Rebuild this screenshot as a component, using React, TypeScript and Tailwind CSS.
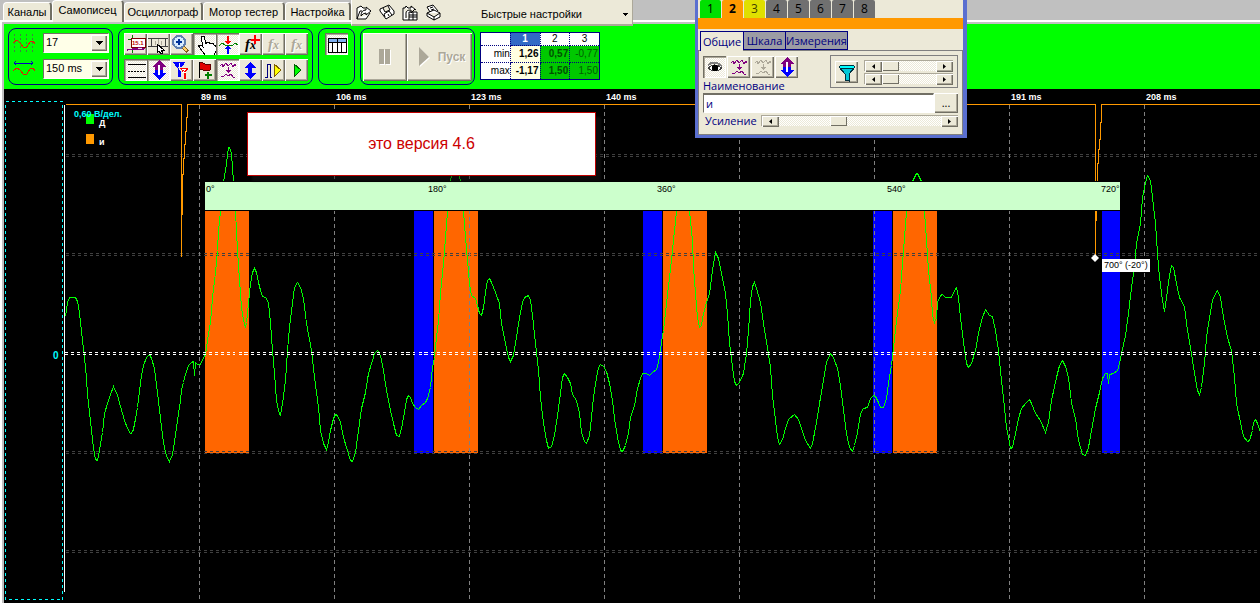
import { useState } from "react";
import clsx from "clsx";

const RAISED = "bg-[#ece9d8] shadow-[inset_1px_1px_0_#fff,inset_-1px_-1px_0_#716f64,inset_-2px_-2px_0_#aca899]";
const PRESSED = "bg-[repeating-conic-gradient(#ffffff_0_25%,#ece9d8_0_50%)] bg-[length:2px_2px] shadow-[inset_1px_1px_0_#716f64,inset_2px_2px_0_#aca899,inset_-1px_-1px_0_#fff]";
const DITHER = "bg-[repeating-conic-gradient(#ffffff_0_25%,#ece9d8_0_50%)] bg-[length:2px_2px]";

const tabs = [
    { name: "Каналы", size: "w-[49px]" },
    { name: "Самописец", size: "w-[72px]" },
    { name: "Осциллограф", size: "w-[79px]" },
    { name: "Мотор тестер", size: "w-[82px]" },
    { name: "Настройка", size: "w-[66px]" },
];

const times = [
    { x: 199, label: "89 ms" },
    { x: 334, label: "106 ms" },
    { x: 469, label: "123 ms" },
    { x: 604, label: "140 ms" },
    { x: 739, label: "" },
    { x: 874, label: "" },
    { x: 1009, label: "191 ms" },
    { x: 1144, label: "208 ms" },
];

const levels = [154, 156, 253, 255, 451, 453, 550, 552];

const phases = [
    { x: 205, label: "0°" },
    { x: 427, label: "180°" },
    { x: 656, label: "360°" },
    { x: 886, label: "540°" },
    { x: 1100, label: "720°" },
];

const signal =
    "65,316 66,309 67,302 69,297 75,297 77,301 79,312 80,322 82,340 84,357 86,378 87,394 89,412 91,430 93,448 95,459 97,460 98,455 100,444 102,432 104,413 107,403 110,394 113,386 117,395 120,406 124,420 127,428 130,433 132,432 134,424 137,407 139,391 141,375 143,365 146,357 149,354 151,358 154,368 157,392 160,418 163,442 166,456 169,461 172,454 174,441 177,420 180,400 181,389 183,382 185,374 188,365 191,362 193,361 194,375 195,362 197,364 200,364 202,359 204,356 " +
    "205,354 207,340 210,322 212,297 215,272 217,250 218,230 220,211 223,181 225,170 227,155 228,147 229,147 231,153 232,168 233,181 235,211 237,250 239,280 241,307 243,320 245,327 246,322 248,303 250,283 252,272 254,268 256,272 258,282 260,290 262,296 265,297 268,302 270,323 272,350 274,373 276,400 279,414 280,415 282,403 285,380 287,350 289,327 292,303 294,287 297,282 300,287 303,298 306,323 311,350 314,377 318,407 320,430 323,443 326,449 328,442 330,430 333,418 335,414 337,415 340,422 343,437 347,450 350,460 352,461 355,452 358,430 361,408 365,392 368,373 372,360 374,353 377,350 380,355 383,370 386,390 390,410 393,423 396,435 399,436 401,428 404,412 406,399 408,395 410,397 412,403 415,407 418,409 421,405 425,402 427,398 430,387 432,367 " +
    "434,357 436,337 438,320 440,293 443,263 445,237 447,211 450,181 455,150 460,181 463,211 465,237 467,260 469,283 471,295 475,298 477,305 479,313 481,315 483,307 485,292 487,280 489,278 491,282 495,292 499,303 501,323 505,343 508,357 510,361 513,355 516,337 519,317 522,302 524,297 528,295 530,300 532,315 535,343 538,370 540,397 543,423 546,440 548,448 551,446 554,435 557,415 560,393 562,377 564,373 567,377 570,383 572,394 576,400 579,413 581,432 584,441 586,443 589,435 591,417 593,397 596,377 598,367 600,364 603,366 606,371 609,383 612,400 614,418 617,437 620,450 622,451 625,445 628,432 630,417 634,405 637,388 640,378 642,373 646,373 649,375 652,372 656,369 658,362 661,342 " +
    "663,330 666,303 669,277 672,250 674,230 676,211 682,186 689,211 692,240 693,267 695,293 697,317 699,327 701,325 703,313 706,302 709,293 712,270 714,257 715,252 718,258 721,273 725,293 727,313 729,343 730,350 732,367 734,381 736,385 739,382 743,373 746,353 748,330 750,300 752,286 754,282 756,288 760,302 763,323 767,347 770,367 772,395 775,420 777,437 779,444 782,439 785,428 788,419 794,414 798,419 801,428 805,440 810,448 812,443 816,422 819,403 823,380 826,362 830,353 833,357 837,368 840,385 843,410 846,433 849,447 852,451 854,445 857,432 860,413 863,408 867,407 870,398 873,395 875,396 878,402 880,407 883,407 886,398 888,383 891,365 " +
    "893,347 896,320 900,290 902,263 904,237 906,211 912,181 916,173 917,173 921,181 924,211 926,240 928,270 931,297 932,315 934,322 936,317 937,302 940,295 942,294 945,297 951,297 954,290 956,287 958,297 960,317 963,342 966,363 968,367 971,363 975,350 978,333 981,320 985,309 989,315 992,316 995,330 998,350 1001,380 1004,407 1006,427 1009,442 1010,448 1012,447 1015,433 1018,418 1021,408 1026,402 1029,399 1031,403 1035,413 1040,420 1045,432 1048,422 1051,400 1056,377 1059,365 1062,360 1065,366 1068,377 1071,402 1075,418 1078,440 1082,454 1085,455 1088,447 1091,430 1095,408 1099,392 1102,378 1105,373 1107,373 1108,383 1109,374 1113,373 1117,370 1119,363 " +
    "1121,353 1125,335 1128,313 1131,287 1134,267 1136,243 1140,223 1142,197 1145,182 1147,175 1150,180 1152,197 1155,223 1157,253 1159,277 1162,300 1164,311 1166,297 1169,275 1171,265 1173,267 1176,283 1179,297 1184,306 1187,330 1191,353 1194,373 1197,390 1199,394 1201,387 1204,363 1206,337 1209,317 1212,300 1215,293 1217,290 1220,297 1223,317 1227,337 1231,350 1234,377 1236,403 1240,422 1243,436 1247,441 1249,440 1252,430 1253,422 1255,419 1257,423 1260,432";

const ignition =
    "65,104 181,104 181,256 181,214 182,214 182,174 183,174 183,158 184,158 184,144 185,144 185,131 186,131 186,117 187,117 187,104 1095,104 1095,254 1095,220 1096,220 1096,182 1097,182 1097,163 1098,163 1098,149 1099,149 1099,139 1100,139 1100,122 1101,122 1101,104 2400,104";

// waves with an arrow between, used in both toolbars
function Waves({ color }: { color: string }) {
    return (
        <path
            d="M4 7l2 -2l1 3l3 -4l2 3l3 -3l2 4l2 -3l1 2M5 17l2 1l3 -3l2 2l3 -2l2 3h2M12 8v4M10 11h5M11 12h3M12 13h1"
            fill="none"
            stroke={color}
        />
    );
}

function UpDown({ top, bottom }: { top: string; bottom: string }) {
    return (
        <>
            <path d="M12 1l7 7h-3v3h-8v-3h-3z" fill={top} />
            <path d="M12 21l7 -7h-3v-3h-8v3h-3z" fill={bottom} />
            <path d="M12 6v10" stroke="#ffffff" strokeWidth="2" />
        </>
    );
}

function Fx({ color, shadow }: { color: string; shadow?: boolean }) {
    return (
        <g className="font-['Liberation_Serif'] text-[15px] font-bold italic">
            {shadow && <text x="7" y="17" fill="#ffffff">f<tspan fontSize="12">x</tspan></text>}
            <text x="6" y="16" fill={color}>f<tspan fontSize="12">x</tspan></text>
        </g>
    );
}

const tools = [
    {
        name: "Значения",
        icon: (
            <>
                <path d="M8 2v18M4 6h4" stroke="#008000" />
                <rect x="7" y="5" width="14" height="9" fill="#fff" stroke="#800000" />
                <text x="8" y="12" fill="#c00000" className="font-['Liberation_Sans'] text-[6px] font-bold">15.1</text>
                <path d="M3 18l2 -2l2 1l2 -2h5l2 -1l2 1h3M3 16h17" fill="none" stroke="#800080" />
            </>
        ),
    },
    {
        name: "Линейка",
        icon: (
            <>
                <path d="M1 5h20M1 13h20M4 5v8M18 5v8" stroke="#404040" />
                <path d="M8 8v4M11 6v6M14 8v4" stroke="#aca899" />
                <path d="M10 11v9l2 -2l2 3l2 -1l-2 -3h3z" fill="#fff" stroke="#000" />
            </>
        ),
    },
    {
        name: "Масштаб",
        icon: (
            <>
                <path d="M12 13l6 6" stroke="#806020" strokeWidth="4" />
                <path d="M12 13l5 5" stroke="#ffcc66" strokeWidth="2" />
                <circle cx="9" cy="9" r="6" fill="#d8ecff" stroke="#6080b0" strokeWidth="2" />
                <path d="M9 6v6M6 9h6" stroke="#003399" strokeWidth="2" />
            </>
        ),
    },
    {
        name: "Рука",
        pressed: true,
        icon: (
            <path
                d="M10 14l-2 -10l1 -1h2l2 8l1 -2h2l1 2l1 -1h2l1 2h1l1 2v4l-2 4h-9l-5 -7l-2 -3h3z"
                fill="#fff"
                stroke="#000"
            />
        ),
    },
    {
        name: "Синхронизация",
        pressed: true,
        icon: (
            <>
                <path d="M3 13l3 -3l3 2h4l3 1l3 -3l3 2" fill="none" stroke="#008000" />
                <path d="M11 3h2v5h2l-3 4l-3 -4h2z" fill="#ff0000" />
                <path d="M11 21h2v-5h2l-3 -4l-3 4h2z" fill="#0000ff" />
            </>
        ),
    },
    {
        name: "Добавить функцию",
        icon: (
            <>
                <Fx color="#000000" />
                <path d="M16 2v9M12 7h9" stroke="#ff0000" strokeWidth="2" />
            </>
        ),
    },
    { name: "Функция 1", icon: <Fx color="#aca899" shadow /> },
    { name: "Функция 2", icon: <Fx color="#aca899" shadow /> },
    {
        name: "Линии",
        pressed: true,
        icon: (
            <>
                <path d="M4 5h18M4 18h18" stroke="#000" />
                <path d="M4 12h18" stroke="#000" strokeDasharray="2 1" />
            </>
        ),
    },
    { name: "Смещение", pressed: true, icon: <UpDown top="#800080" bottom="#0000ff" /> },
    {
        name: "Фильтры",
        icon: (
            <>
                <path d="M3 3h12l-4 7v8h-3v-8z" fill="#0000ff" />
                <path d="M8 8h12l-4 6v6h-3v-6z" fill="#ff0000" stroke="#ece9d8" />
                <path d="M9 4v4M12 10h4l-3 3h3" fill="none" stroke="#fff" />
            </>
        ),
    },
    {
        name: "Флаг",
        icon: (
            <>
                <path d="M6 4l2 -1l4 2h5v6l-5 1l-4 -2l-2 1z" fill="#e00000" stroke="#600000" />
                <path d="M6 3v16" stroke="#000" />
                <path d="M15 13v7M12 16h7" stroke="#008000" strokeWidth="2" />
            </>
        ),
    },
    { name: "Волны", pressed: true, icon: <Waves color="#800080" /> },
    {
        name: "Вверх и вниз",
        icon: <path d="M11 3l6 6h-4v5h4l-6 6l-6 -6h4v-5h-4z" fill="#0000ff" />,
    },
    {
        name: "Шаг",
        icon: (
            <>
                <path d="M3 18h2v-13h3v13h2" fill="none" stroke="#000080" />
                <path d="M12 5v13l7 -7z" fill="#ffff00" stroke="#806000" />
            </>
        ),
    },
    { name: "Старт", icon: <path d="M9 5v13l7 -7z" fill="#00ff00" stroke="#006000" /> },
];

const quick = [
    { name: "Открыть", d: "M1 15V4l4 -2l2 2h2M1 15l3 -8h2M1 15h9l4 -6M5 12q0 -6 5 -6v-3l5 4l-5 4v-2q-3 0 -5 3z" },
    { name: "Сохранить", d: "M1 5l9 -4l5 6v3l-8 5l-6 -8zM4 4l2 4l5 -2l-2 -4M6 13l-1 -3l5 -3l3 4M9 10l1 2" },
    { name: "Таблица", d: "M1 4h2l1 -2l2 2h3v-2l5 4M1 4v12h6M4 14v-5q0 -3 5 -3v3l4 -4M7 8h8v8h-8zM7 11h8M7 13h8M11 8v8" },
    { name: "Печать", d: "M5 8l-3 -5l6 -2l5 6M2 9l7 -3l6 3v4l-6 3l-7 -4zM2 9l7 4l6 -4M9 13v3M5 4l3 -1M6 6l3 -1" },
];

function Tool({ name, pressed, children }: { name: string; pressed?: boolean; children: React.ReactNode }) {
    return (
        <button type="button" aria-label={name} title={name} className={clsx("h-[22px] w-[23px]", pressed ? PRESSED : RAISED)}>
            <svg width="23" height="22" viewBox="0 0 23 22" shapeRendering="crispEdges" aria-hidden="true">
                {children}
            </svg>
        </button>
    );
}

function Combo({ label, options }: { label: string; options: string[] }) {
    return (
        <div className="relative h-5 w-[66px]">
            <select
                aria-label={label}
                className="block h-5 w-full appearance-none border border-[#716f64] border-r-white border-b-white bg-[#ffffe8] pb-[2px] pl-[2px] text-[11px] leading-4 text-black"
            >
                {options.map((o) => <option key={o}>{o}</option>)}
            </select>
            <span className={clsx("pointer-events-none absolute top-[2px] right-[2px] flex h-4 w-4 items-center justify-center", RAISED)}>
                <svg width="7" height="4" viewBox="0 0 7 4" shapeRendering="crispEdges"><path d="M0 0h7l-3.500 4z" /></svg>
            </span>
        </div>
    );
}

function Scroller({ label, start, className }: { label: string; start: number; className?: string }) {
    const [value, setValue] = useState(start);
    const arrow = clsx("flex h-[11px] w-[17px] shrink-0 items-center justify-center", RAISED);
    return (
        <div className={clsx("flex h-[11px] border-t border-l border-[#aca899]", DITHER, className)}>
            <button type="button" aria-label={label + " меньше"} className={arrow} onClick={() => setValue(Math.max(0, value - 1))}>
                <svg width="3" height="5" viewBox="0 0 3 5"><path d="M3 0v5l-3 -2.500z" /></svg>
            </button>
            <input
                type="range"
                aria-label={label}
                value={value}
                onChange={(e) => setValue(Number(e.target.value))}
                className="h-[10px] w-full min-w-0 appearance-none bg-transparent [&::-webkit-slider-thumb]:h-[10px] [&::-webkit-slider-thumb]:w-[17px] [&::-webkit-slider-thumb]:appearance-none [&::-webkit-slider-thumb]:bg-[#ece9d8] [&::-webkit-slider-thumb]:shadow-[inset_1px_1px_0_#fff,inset_-1px_-1px_0_#716f64]"
            />
            <button type="button" aria-label={label + " больше"} className={arrow} onClick={() => setValue(Math.min(100, value + 1))}>
                <svg width="3" height="5" viewBox="0 0 3 5"><path d="M0 0v5l3 -2.500z" /></svg>
            </button>
        </div>
    );
}

function TopBar() {
    return (
        <header className="flex h-5 bg-[#c0c0c0]">
            <nav className="flex pl-[3px]">
                {tabs.map((t) => (
                    <button
                        type="button"
                        key={t.name}
                        className={clsx(
                            "rounded-t-sm border-t border-r-2 border-l border-t-white border-r-[#716f64] border-l-white bg-[#ece9d8] text-[11px] leading-4 whitespace-nowrap",
                            t.size,
                            t.name === "Самописец" ? "relative z-10 h-[22px] pb-1" : "mt-[2px] h-[18px]"
                        )}
                    >
                        {t.name}
                    </button>
                ))}
            </nav>
            <div className="relative z-10 flex h-[26px] w-[282px] items-center border-r border-b-2 border-l border-[#aca899] border-l-white bg-[#ece9d8] pl-1">
                <div className="flex gap-[7px]">
                    {quick.map((q) => (
                        <button type="button" key={q.name} aria-label={q.name}>
                            <svg width="16" height="17" viewBox="0 0 16 17" fill="none" stroke="#000">
                                <path d={q.d} fill="#fff" />
                            </svg>
                        </button>
                    ))}
                </div>
                <button type="button" className="flex flex-1 items-center justify-between pt-1 pr-1 pl-10 text-[11px]">
                    <span>Быстрые настройки</span>
                    <svg width="5" height="3" viewBox="0 0 5 3" shapeRendering="crispEdges"><path d="M0 0h5l-2.500 3z" /></svg>
                </button>
            </div>
        </header>
    );
}

function Controls() {
    const box = "h-[57px] rounded-lg border border-[#000080]";
    return (
        <section className="flex h-[65px] items-start gap-[5px] bg-[#00ff00] pt-1 pl-1">
            <div className={clsx(box, "flex w-[105px] flex-col gap-[6px] pt-1 pl-[3px]")}>
                <div className="flex gap-2">
                    <svg width="23" height="20" viewBox="0 0 23 20" shapeRendering="crispEdges" fill="none">
                        <path d="M2 1v19M8 1v19M14 1v19M20 1v19" stroke="#408040" strokeDasharray="2 2" />
                        <path d="M1 10l4 -3l3 3l4 5l3 -1l3 -5l3 -1l2 3" stroke="#e02000" />
                    </svg>
                    <Combo label="Делений" options={["17", "10", "5"]} />
                </div>
                <div className="flex gap-2">
                    <svg width="23" height="20" viewBox="0 0 23 20" shapeRendering="crispEdges" fill="none">
                        <path d="M2 4h19M4 2l-2 2l2 2M19 2l2 2l-2 2" stroke="#0000c0" />
                        <path d="M1 12l4 -3l3 2l4 5l3 -1l3 -5l3 -1l2 3" stroke="#e02000" />
                    </svg>
                    <Combo label="Развертка" options={["150 ms", "300 ms"]} />
                </div>
            </div>
            <div className={clsx(box, "w-[195px] pt-1 pl-[5px]")}>
                <div className="grid w-[184px] grid-cols-8 gap-y-1">
                    {tools.map((t) => <Tool key={t.name} name={t.name} pressed={t.pressed}>{t.icon}</Tool>)}
                </div>
            </div>
            <div className={clsx(box, "w-[37px] pt-1 pl-[6px]")}>
                <Tool name="Показать таблицу" pressed>
                    <rect x="3" y="5" width="18" height="14" fill="#fff" stroke="#000" />
                    <rect x="4" y="6" width="17" height="3" fill="#80b0f0" />
                    <path d="M3 9h18M7 9v10M12 6v13M16 9v10" stroke="#000" />
                </Tool>
            </div>
            <div className={clsx(box, "flex w-[115px] p-[2px] pt-1")}>
                <button type="button" aria-label="Пауза" className={clsx("flex h-12 w-11 items-center justify-center", RAISED)}>
                    <svg width="12" height="16" viewBox="0 0 12 16" shapeRendering="crispEdges">
                        <path d="M1 1h5v15h-5zM7 1h5v15h-5z" fill="#fff" />
                        <path d="M0 0h5v15h-5zM6 0h5v15h-5z" fill="#aca899" />
                    </svg>
                </button>
                <button type="button" className={clsx("flex h-12 flex-1 items-center justify-center gap-2 pl-1 text-[12px] font-bold text-[#aca899] [text-shadow:1px_1px_0_#fff]", RAISED)}>
                    <svg width="12" height="20" viewBox="0 0 12 20">
                        <path d="M2 1v19l10 -9z" fill="#fff" />
                        <path d="M1 0v19l10 -9z" fill="#aca899" />
                    </svg>
                    Пуск
                </button>
            </div>
            <table className="mt-1 h-12 w-[120px] table-fixed border-collapse border border-[#000080] bg-white text-right text-[10px] leading-3 [&_td]:border [&_td]:border-dotted [&_td]:border-[#000080] [&_td]:p-0 [&_td]:pr-px [&_th]:border [&_th]:border-dotted [&_th]:border-[#000080] [&_th]:p-0">
                <thead>
                    <tr className="text-center">
                        <td></td>
                        <th scope="col" className="bg-[#316ac5] text-white">1</th>
                        <th scope="col" className="font-normal">2</th>
                        <th scope="col" className="font-normal">3</th>
                    </tr>
                </thead>
                <tbody>
                    <tr>
                        <th scope="row" className="font-normal">min</th>
                        <td className="bg-[#ffffe1] font-bold">1,26</td>
                        <td className="bg-[#00c800] font-bold text-[#005000]">0,57</td>
                        <td className="bg-[#00c800] text-[#006000]">-0,77</td>
                    </tr>
                    <tr>
                        <th scope="row" className="font-normal">max</th>
                        <td className="bg-[#ffffe1] font-bold">-1,17</td>
                        <td className="bg-[#00c800] font-bold text-[#005000]">1,50</td>
                        <td className="bg-[#00c800] text-[#006000]">1,50</td>
                    </tr>
                </tbody>
            </table>
        </section>
    );
}

function Plot() {
    return (
        <section className="relative flex-1 overflow-hidden bg-black">
            <svg className="block h-[514px] w-full" role="img" aria-label="Осциллограмма">
                {/* everything below is in window pixels, the plot starts at 4,89 */}
                <g transform="translate(-4 -89)">
                    <g shapeRendering="crispEdges">
                        {[205, 434, 663, 893].map((x) => <rect key={x} x={x} y="211" width="44" height="242" fill="#ff6600" />)}
                        {[414, 643, 873].map((x) => <rect key={x} x={x} y="211" width="19" height="242" fill="#0000ff" />)}
                        <rect x="1102" y="211" width="18" height="242" fill="#0000ff" />
                    </g>
                    <g transform="translate(0.5 0.5)" fill="none" shapeRendering="crispEdges">
                        {levels.map((y) => <path key={y} d={`M65 ${y}H2400`} stroke="#404040" strokeDasharray="3 3" />)}
                        {times.map((t) => <path key={t.x} d={`M${t.x} 104V600`} stroke="#808080" strokeDasharray="4 3" />)}
                        <rect x="5" y="101" width="57" height="498" stroke="#00ffff" strokeDasharray="3 3" />
                        <path d="M64 104V591" stroke="#ffffff" />
                        <polyline points={ignition} stroke="#ff9900" />
                        <polyline points={signal} stroke="#00ff00" />
                        <path d="M64 352H2400M64 354H2400" stroke="#ffffff" strokeDasharray="3 3" />
                    </g>
                    <rect x="205" y="181" width="916" height="30" fill="#000000" />
                    <rect x="205" y="182" width="915" height="28" fill="#ccffcc" />
                    <path d="M1095 254l4 4l-4 4l-4 -4z" fill="#ffffff" />
                    <rect x="86" y="114" width="8" height="10" fill="#00ff00" />
                    <rect x="86" y="134" width="8" height="10" fill="#ff9900" />
                    <g className="text-[9px] font-bold" fill="#ffffff">
                        {times.map((t) => <text key={t.x} x={t.x + 2} y="100">{t.label}</text>)}
                        <text x="74" y="117" fill="#00ffff">0,60 В/дел.</text>
                        <text x="53" y="359" fill="#00ffff" fontSize="10">0</text>
                        <text x="99" y="126">Д</text>
                        <text x="99" y="145">и</text>
                    </g>
                    <g className="text-[9px]" fill="#000000">
                        {phases.map((p) => <text key={p.x} x={p.x + 1} y="192">{p.label}</text>)}
                    </g>
                </g>
            </svg>
            <div className="absolute top-[23px] left-[243px] flex h-[64px] w-[349px] items-center justify-center border border-[#c00000] bg-white text-[16px] text-[#cc0000] shadow-[5px_5px_2px_rgba(24,24,24,0.5)]">
                это версия 4.6
            </div>
            <div className="absolute top-[170px] left-[1098px] bg-white px-[2px] text-[9px] leading-[13px] whitespace-nowrap">700° (-20°)</div>
        </section>
    );
}

const channels = [
    { n: 1, look: "bg-[#00e000] text-black" },
    { n: 2, look: "bg-[#ff9900] font-bold text-black" },
    { n: 3, look: "bg-[#e0e000] text-[#404000]" },
    { n: 4, look: "bg-[#707070] text-black" },
    { n: 5, look: "bg-[#707070] text-black" },
    { n: 6, look: "bg-[#707070] text-black" },
    { n: 7, look: "bg-[#707070] text-black" },
    { n: 8, look: "bg-[#707070] text-black" },
];

function ChannelWindow() {
    const [name, setName] = useState("и");
    return (
        <aside className="absolute top-0 left-[695px] z-20 h-[138px] w-[272px] border-r-4 border-b-3 border-l-3 border-[#5a6fd0] bg-[#ece9d8] font-['Open_Sans','Noto_Sans',sans-serif] text-[11px] text-[#000080]">
            <div className="flex h-[18px] gap-px pl-[2px] text-[12px] leading-[18px]">
                {channels.map((c) => (
                    <button type="button" key={c.n} className={clsx("h-[18px] w-[21px] rounded-t-xs", c.look)}>{c.n}</button>
                ))}
            </div>
            <div className="h-[11px] bg-[#ff9900]"></div>
            <div className="mt-[2px] flex h-[19px] items-start pl-[2px] leading-4">
                <button type="button" className="z-10 h-5 w-[43px] border-t border-l border-[#000080] bg-[#ece9d8]">Общие</button>
                <button type="button" className="h-[19px] w-[43px] border border-[#000080] bg-[#9c9ca4]">Шкала</button>
                <button type="button" className="h-[19px] w-[62px] border border-l-0 border-[#000080] bg-[#9c9ca4]">Измерения</button>
            </div>
            <div className="h-[85px] border border-[#808080] px-1 pt-1">
                <div className="flex justify-between">
                    <div className="flex gap-px pt-px">
                        <Tool name="Видимость" pressed>
                            <path d="M5 12q6 -6 14 0q-7 6 -14 0z" fill="#fff" stroke="#404040" />
                            <path d="M5 9q7 -5 14 1" fill="none" stroke="#808080" strokeWidth="2" />
                            <circle cx="12" cy="12" r="3" fill="#000" />
                        </Tool>
                        <Tool name="Волны канала"><Waves color="#800080" /></Tool>
                        <Tool name="Без волн"><Waves color="#aca899" /></Tool>
                        <Tool name="Смещение канала"><UpDown top="#800080" bottom="#0000ff" /></Tool>
                    </div>
                    <div className="flex h-[33px] w-[128px] items-center gap-[6px] border border-[#808080] px-1">
                        <Tool name="Фильтр">
                            <path d="M4 6l6 7v6l4 1v-7l6 -7z" fill="#00c8d8" stroke="#003040" />
                            <ellipse cx="12" cy="6" rx="8" ry="2" fill="#00ffff" stroke="#003040" />
                        </Tool>
                        <div className="flex flex-1 flex-col gap-[2px]">
                            <Scroller label="Фильтр верх" start={0} />
                            <Scroller label="Фильтр низ" start={0} />
                        </div>
                    </div>
                </div>
                <label htmlFor="channel-name" className="-mt-[5px] block h-[5px] leading-[5px]">Наименование</label>
                <div className="mt-[5px] flex h-5">
                    <input
                        id="channel-name"
                        value={name}
                        onChange={(e) => setName(e.target.value)}
                        className="h-5 min-w-0 flex-1 border border-t-2 border-[#716f64] border-r-white border-b-white bg-white pl-[2px] text-[#000080] outline-none"
                    />
                    <button type="button" className={clsx("h-5 w-6 leading-4 text-black", RAISED)}>...</button>
                </div>
                <div className="mt-px flex items-center gap-1 pl-[2px] leading-[13px]">
                    <span>Усиление</span>
                    <Scroller label="Усиление" start={35} className="flex-1" />
                </div>
            </div>
        </aside>
    );
}

export default function App() {
    return (
        <div className="relative flex min-h-screen flex-col overflow-hidden bg-[#c0c0c0] font-['Liberation_Sans',Arial,sans-serif] text-black">
            <TopBar />
            <main className="flex flex-1 flex-col border-t-2 border-l-2 border-white">
                <div className="flex flex-1 flex-col border-t-2 border-l-2 border-[#c0c0c0]">
                    <Controls />
                    <Plot />
                </div>
            </main>
            <ChannelWindow />
        </div>
    );
}
